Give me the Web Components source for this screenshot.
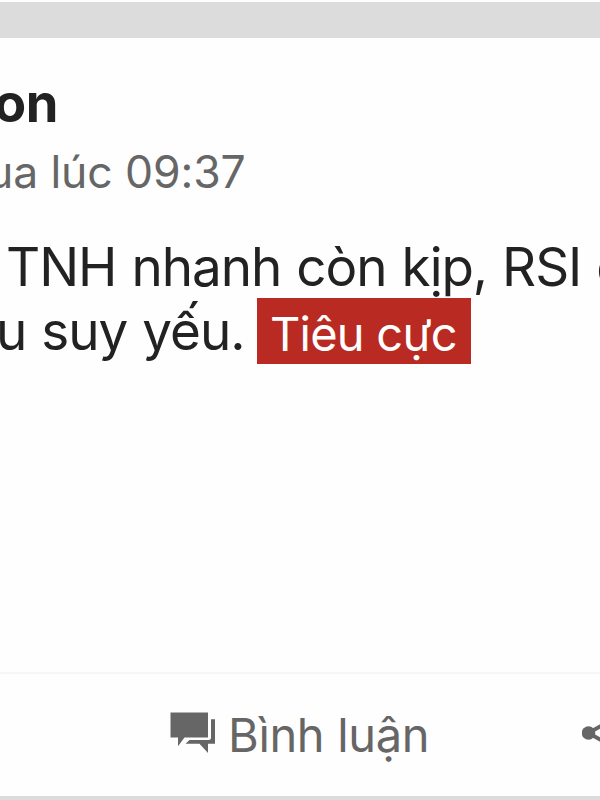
<!DOCTYPE html>
<html lang="vi">
<head>
<meta charset="utf-8">
<title>Bình luận</title>
<style>
    body {
        margin: 0;
        background: #dcdcdc;
        font-family: Inter, "Liberation Sans", sans-serif;
        overflow: hidden;
    }
</style>
</head>
<body>
<post-card>
    <post-header slot="header">
        <span slot="name">on</span>
        <span slot="time">ua lúc 09:37</span>
    </post-header>
    <post-content slot="content">
        <span slot="first">TNH nhanh còn kịp, RSI</span>
        <span slot="next">đ</span>
        <span slot="second">u suy yếu.</span>
        <mood-badge slot="mood">Tiêu cực</mood-badge>
    </post-content>
    <post-actions slot="actions"></post-actions>
</post-card>

<script>
class PostCard extends HTMLElement {
    constructor() {
        super();
        this.attachShadow({ mode: 'open' }).innerHTML = `
            <style>
                :host {
                    display: flex;
                    flex-direction: column;
                    box-sizing: border-box;
                    width: 600px;
                    height: 800px;
                    overflow: hidden;
                    border-top: 2px solid #fff;
                }
                .gap {
                    flex: none;
                    height: 36px;
                    background: #dcdcdc;
                }
                .card {
                    display: flex;
                    flex-direction: column;
                    height: 758px;
                    background: #fefefe;
                }
                .body { flex: 1; }
            </style>
            <div class="gap"></div>
            <div class="card">
                <slot name="header"></slot>
                <div class="body"><slot name="content"></slot></div>
                <slot name="actions"></slot>
            </div>
        `;
    }
}

class PostHeader extends HTMLElement {
    constructor() {
        super();
        this.attachShadow({ mode: 'open' }).innerHTML = `
            <style>
                :host {
                    display: block;
                    padding-top: 33px;
                    white-space: nowrap;
                }
                .name {
                    height: 71px;
                    margin-left: -6px;
                    font-size: 52.5px;
                    line-height: 64px;
                    font-weight: 700;
                    letter-spacing: -0.5px;
                    color: #222;
                }
                .time {
                    height: 92px;
                    margin-left: -13px;
                    font-size: 44.5px;
                    line-height: 60px;
                    letter-spacing: -0.12px;
                    color: #666;
                }
            </style>
            <div class="name"><slot name="name"></slot></div>
            <div class="time"><slot name="time"></slot></div>
        `;
    }
}

class PostContent extends HTMLElement {
    constructor() {
        super();
        this.attachShadow({ mode: 'open' }).innerHTML = `
            <style>
                :host {
                    display: block;
                    font-size: 53px;
                    line-height: 67px;
                    letter-spacing: -1.05px;
                    white-space: nowrap;
                    color: #222;
                }
                .line {
                    display: flex;
                    height: 64px;
                }
                .first { margin-left: 6px; word-spacing: 1.2px; }
                .next { margin-left: 15px; }
                .second { margin-left: -4px; word-spacing: 1.2px; }
            </style>
            <div class="line">
                <div class="first"><slot name="first"></slot></div>
                <div class="next"><slot name="next"></slot></div>
            </div>
            <div class="line">
                <div class="second"><slot name="second"></slot></div>
                <slot name="mood"></slot>
            </div>
        `;
    }
}

class MoodBadge extends HTMLElement {
    constructor() {
        super();
        this.attachShadow({ mode: 'open' }).innerHTML = `
            <style>
                :host {
                    display: block;
                    box-sizing: border-box;
                    width: 214px;
                    height: 66px;
                    margin-left: 13px;
                    padding-left: 12.5px;
                    background: #b92b22;
                    color: #fff;
                    font-size: 47px;
                    line-height: 71px;
                    letter-spacing: -0.75px;
                }
            </style>
            <slot></slot>
        `;
    }
}

class PostActions extends HTMLElement {
    constructor() {
        super();
        this.attachShadow({ mode: 'open' }).innerHTML = `
            <style>
                :host {
                    display: flex;
                    align-items: center;
                    box-sizing: border-box;
                    height: 124.5px;
                    padding-left: 170px;
                    border-top: 2px solid #f6f6f6;
                    color: #666;
                    font-size: 47px;
                    line-height: 60px;
                    letter-spacing: -0.35px;
                    white-space: nowrap;
                }
                svg { flex: none; fill: currentColor; }
                .comment { margin: -4px 12px 0 0; }
                .label { flex: none; width: 354px; }
                .share { margin-top: -4px; }
            </style>
            <svg class="comment" width="46" height="42" viewBox="0 0 46 42">
                <path d="M.5 .5H38V25.5H14.5L8 34.3V25.5H.5Z"/>
                <path d="M41 7.3H45V31.7H38V41L29.5 31.7H15.5L19.5 28H38.5Q41 28 41 25.5Z"/>
            </svg>
            <div class="label">Bình luận</div>
            <svg class="share" width="44" height="48" viewBox="0 0 44 48">
                <path d="M6.5 24L33 9M6.5 24L33 39" fill="none" stroke="currentColor" stroke-width="4"/>
                <circle cx="6.5" cy="24" r="6.8"/>
                <circle cx="35" cy="8" r="7"/>
                <circle cx="35" cy="40" r="7"/>
            </svg>
        `;
    }
}

customElements.define('post-card', PostCard);
customElements.define('post-header', PostHeader);
customElements.define('post-content', PostContent);
customElements.define('mood-badge', MoodBadge);
customElements.define('post-actions', PostActions);
</script>
</body>
</html>
